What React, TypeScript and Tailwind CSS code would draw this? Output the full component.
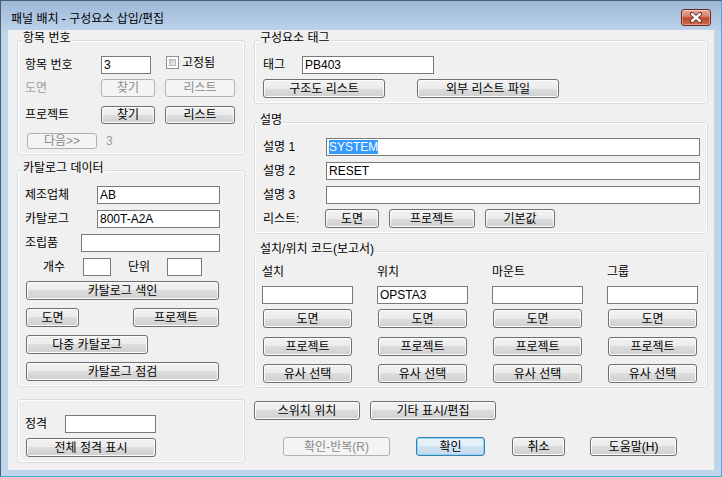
import React from "react";

type P = { className?: string; children?: React.ReactNode };

function Btn({
  className = "",
  children,
  disabled = false,
  primary = false,
}: P & { disabled?: boolean; primary?: boolean }) {
  const look = disabled
    ? "border-[#adb2b5] bg-[#f4f4f4] text-[#8a8a8a]"
    : primary
    ? "border-[#3c7fb1] bg-[linear-gradient(#eaf3fb,#e2eef8_50%,#d0e3f2_50%,#c5dbec)] shadow-[inset_0_0_0_1px_#8ad8f6] text-black"
    : "border-[#707070] bg-[linear-gradient(#f2f2f2,#ebebeb_50%,#dddddd_50%,#cfcfcf)] shadow-[inset_0_0_0_1px_#fcfcfc] text-black";
  return (
    <div
      className={`box-border flex shrink-0 items-center justify-center rounded-[3px] border text-[12px] leading-[14px] whitespace-nowrap ${look} ${className}`}
    >
      {children}
    </div>
  );
}

function Input({ className = "", children }: P) {
  return (
    <div
      className={`box-border flex h-[18px] shrink-0 items-center border border-[#7a7a7a] bg-white pl-[2px] text-[12px] leading-[14px] whitespace-nowrap ${className}`}
    >
      {children}
    </div>
  );
}

function Group({ title, className = "", children }: P & { title?: string }) {
  return (
    <div
      className={`relative box-border rounded-[3px] border border-[#d5dfe5] shadow-[inset_0_0_0_1px_#ffffff] ${className}`}
    >
      {title && (
        <div className="absolute left-[4px] top-[-10px] bg-[#f0f0f0] px-[1px] leading-[14px] whitespace-nowrap">
          {title}
        </div>
      )}
      {children}
    </div>
  );
}

function Checkbox() {
  return (
    <div className="box-border h-[13px] w-[13px] shrink-0 border border-[#8f8f8f] bg-white p-[2px]">
      <div className="box-border h-full w-full border border-[#b3b8be] bg-[linear-gradient(135deg,#c6cbd2,#eef0f2)]" />
    </div>
  );
}

function LocCol({ head, value }: { head: string; value?: string }) {
  return (
    <div className="flex w-[91px] flex-col">
      <div className="h-[14px] leading-[14px]">{head}</div>
      <Input className="mt-[7px] w-[91px]">{value}</Input>
      <Btn className="mt-[5px] ml-[1px] h-[19px] w-[89px]">도면</Btn>
      <Btn className="mt-[9px] ml-[1px] h-[19px] w-[89px]">프로젝트</Btn>
      <Btn className="mt-[8px] ml-[1px] h-[19px] w-[89px]">유사 선택</Btn>
    </div>
  );
}

export default function App() {
  return (
    <div className="box-border flex h-[477px] w-[722px] flex-col border border-t-[#4d5d6e] border-l-[#4d5d6e] border-r-[#3fb0de] border-b-[#3fb0de] bg-[#bfd5ec] font-['Liberation_Sans','Noto_Sans_CJK_KR',sans-serif] text-[12px] text-black select-none">
      {/* title bar */}
      <div className="flex h-[29px] shrink-0 items-start justify-between bg-[linear-gradient(#9cb7d6,#bcd2ea)]">
        <div className="pt-[11px] pl-[10px] leading-[14px] whitespace-nowrap">
          패널 배치 - 구성요소 삽입/편집
        </div>
        <div className="mt-[8px] mr-[10px] box-border flex h-[17px] w-[30px] items-center justify-center rounded-[3px] border border-[#6b2a20] bg-[linear-gradient(#e9ab9f,#d67a66_45%,#c2462c_52%,#cf6a4c)] shadow-[inset_0_0_0_1px_rgba(255,255,255,0.35)]">
          <svg width="14" height="11" viewBox="0 0 14 11">
            <path
              d="M3 2 L11 9 M11 2 L3 9"
              stroke="#5a241b"
              strokeWidth="4.2"
              strokeLinecap="round"
            />
            <path
              d="M3 2 L11 9 M11 2 L3 9"
              stroke="#ffffff"
              strokeWidth="2.4"
              strokeLinecap="round"
            />
          </svg>
        </div>
      </div>

      {/* frame body */}
      <div className="flex flex-1 px-[7px] pb-[6px]">
        <div className="flex h-[440px] w-[706px] bg-[#f0f0f0] pt-[10px] pl-[9px]">
          {/* left column */}
          <div className="flex w-[228px] flex-col">
            <Group title="항목 번호" className="h-[115px] pt-[15px] pl-[7px]">
              <div className="flex h-[18px] items-center">
                <div className="w-[76px] leading-[14px]">항목 번호</div>
                <Input className="w-[50px]">3</Input>
                <div className="ml-[15px] flex h-[13px] items-center self-start">
                  <Checkbox />
                  <span className="ml-[3px] leading-[14px]">고정됨</span>
                </div>
              </div>
              <div className="mt-[5px] flex h-[18px] items-center">
                <div className="w-[76px] leading-[14px] text-[#a0a0a0]">도면</div>
                <Btn disabled className="h-[18px] w-[54px]">
                  찾기
                </Btn>
                <Btn disabled className="ml-[10px] h-[18px] w-[70px]">
                  리스트
                </Btn>
              </div>
              <div className="mt-[9px] flex h-[18px] items-center">
                <div className="w-[76px] leading-[14px]">프로젝트</div>
                <Btn className="h-[18px] w-[54px]">찾기</Btn>
                <Btn className="ml-[10px] h-[18px] w-[70px]">리스트</Btn>
              </div>
              <div className="mt-[9px] flex h-[16px] items-center">
                <Btn disabled className="ml-[2px] h-[16px] w-[70px]">
                  다음&gt;&gt;
                </Btn>
                <span className="ml-[9px] leading-[14px] text-[#9a9a9a]">3</span>
              </div>
            </Group>

            <Group title="카탈로그 데이터" className="mt-[15px] h-[217px] pt-[15px] pl-[7px]">
              <div className="flex h-[18px] items-center">
                <div className="w-[72px] leading-[14px]">제조업체</div>
                <Input className="w-[123px]">AB</Input>
              </div>
              <div className="mt-[6px] flex h-[18px] items-center">
                <div className="w-[72px] leading-[14px]">카탈로그</div>
                <Input className="w-[123px]">800T-A2A</Input>
              </div>
              <div className="mt-[6px] flex h-[18px] items-center">
                <div className="w-[56px] leading-[14px]">조립품</div>
                <Input className="w-[139px]" />
              </div>
              <div className="mt-[6px] flex h-[18px] items-center">
                <div className="ml-[18px] w-[40px] leading-[14px]">개수</div>
                <Input className="w-[28px]" />
                <div className="ml-[17px] w-[39px] leading-[14px]">단위</div>
                <Input className="w-[35px]" />
              </div>
              <Btn className="mt-[5px] ml-[1px] h-[19px] w-[193px]">카탈로그 색인</Btn>
              <div className="mt-[8px] flex h-[19px]">
                <Btn className="ml-[1px] h-[19px] w-[53px]">도면</Btn>
                <Btn className="ml-[54px] h-[19px] w-[86px]">프로젝트</Btn>
              </div>
              <Btn className="mt-[8px] ml-[1px] h-[19px] w-[122px]">다중 카탈로그</Btn>
              <Btn className="mt-[8px] ml-[1px] h-[19px] w-[193px]">카탈로그 점검</Btn>
            </Group>

            <Group className="mt-[12px] h-[64px] pt-[15px] pl-[7px]">
              <div className="flex h-[18px] items-center">
                <div className="w-[40px] leading-[14px]">정격</div>
                <Input className="w-[91px]" />
              </div>
              <Btn className="mt-[5px] ml-[1px] h-[19px] w-[130px]">전체 정격 표시</Btn>
            </Group>
          </div>

          {/* right column */}
          <div className="ml-[9px] flex w-[454px] flex-col">
            <Group title="구성요소 태그" className="h-[64px] pt-[15px] pl-[8px]">
              <div className="flex h-[18px] items-center">
                <div className="w-[39px] leading-[14px]">태그</div>
                <Input className="w-[132px]">PB403</Input>
              </div>
              <div className="mt-[5px] flex h-[19px]">
                <Btn className="h-[19px] w-[122px]">구조도 리스트</Btn>
                <Btn className="ml-[32px] h-[19px] w-[142px]">외부 리스트 파일</Btn>
              </div>
            </Group>

            <Group title="설명" className="mt-[18px] h-[112px] pt-[15px] pl-[8px]">
              <div className="flex h-[18px] items-center">
                <div className="w-[63px] leading-[14px]">설명 1</div>
                <Input className="w-[374px]">
                  <span className="bg-[#3399ff] leading-[14px] text-white">SYSTEM</span>
                </Input>
              </div>
              <div className="mt-[6px] flex h-[18px] items-center">
                <div className="w-[63px] leading-[14px]">설명 2</div>
                <Input className="w-[374px]">RESET</Input>
              </div>
              <div className="mt-[6px] flex h-[18px] items-center">
                <div className="w-[63px] leading-[14px]">설명 3</div>
                <Input className="w-[374px]" />
              </div>
              <div className="mt-[5px] flex h-[19px] items-center">
                <div className="w-[62px] leading-[14px]">리스트:</div>
                <Btn className="h-[19px] w-[54px]">도면</Btn>
                <Btn className="ml-[10px] h-[19px] w-[86px]">프로젝트</Btn>
                <Btn className="ml-[10px] h-[19px] w-[70px]">기본값</Btn>
              </div>
            </Group>

            <Group title="설치/위치 코드(보고서)" className="mt-[17px] h-[137px] pt-[13px] pl-[7px]">
              <div className="flex gap-[24px]">
                <LocCol head="설치" />
                <LocCol head="위치" value="OPSTA3" />
                <LocCol head="마운트" />
                <LocCol head="그룹" />
              </div>
            </Group>

            <div className="mt-[13px] flex h-[19px]">
              <Btn className="h-[19px] w-[106px]">스위치 위치</Btn>
              <Btn className="ml-[10px] h-[19px] w-[126px]">기타 표시/편집</Btn>
            </div>
            <div className="mt-[17px] flex h-[19px]">
              <Btn disabled className="ml-[29px] h-[19px] w-[107px]">
                확인-반복(R)
              </Btn>
              <Btn primary className="ml-[26px] h-[19px] w-[69px]">
                확인
              </Btn>
              <Btn className="ml-[27px] h-[19px] w-[53px]">취소</Btn>
              <Btn className="ml-[25px] h-[19px] w-[87px]">도움말(H)</Btn>
            </div>
          </div>
        </div>
      </div>
    </div>
  );
}
